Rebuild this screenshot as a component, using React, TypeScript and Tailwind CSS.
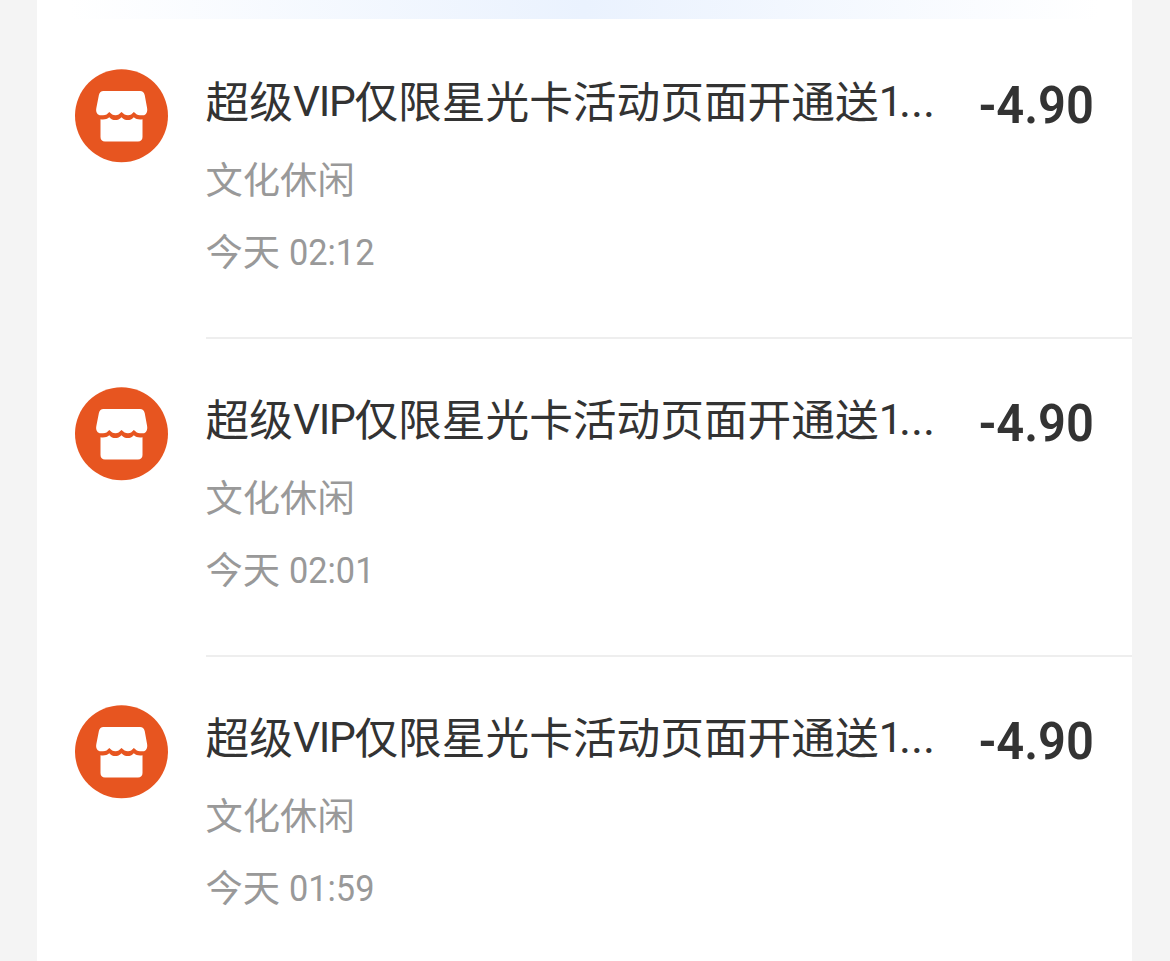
type Transaction = { time: string; amount: string };

const transactions: Transaction[] = [
  { time: "02:12", amount: "-4.90" },
  { time: "02:01", amount: "-4.90" },
  { time: "01:59", amount: "-4.90" },
];

function StoreIcon() {
  return (
    <svg viewBox="0 0 94 94" className="mt-[48px] h-[94px] w-[94px] shrink-0" aria-hidden="true">
      <circle cx="46.5" cy="46.7" r="46.5" fill="#e75520" />
      <path
        fill="#fff"
        d="M28.500 22H65C67.500 22 69 23.500 69.700 26L72 38.500C73 43 71 46.300 68 46.300H65C62.500 46.300 61 45 58.800 43C57 45 55.500 46.300 53 46.300C50.500 46.300 48.500 45 46.500 43C44.500 45 43 46.300 40.500 46.300C38 46.300 36.200 45 34.300 43C32.500 45 31 46.300 28 46.300H26C22.500 46.300 20.500 43.300 21.300 39.200L23.900 26C24.600 23.500 26 22 28.500 22Z"
      />
      <path
        fill="#fff"
        d="M25.500 50.200C29 51 32 50 34.300 48.200C37.500 52 43 52 46.500 48.200C50 52 55.500 52 58.800 48.200C61 50 64 51 67.500 50.200V68C67.500 70.800 65.700 72.500 63 72.500H30C27.200 72.500 25.500 70.800 25.500 68Z"
      />
    </svg>
  );
}

function TransactionRow({ item, last }: { item: Transaction; last: boolean }) {
  return (
    <li className="flex h-[318px] pl-[38px]">
      <StoreIcon />
      <div
        className={`ml-[36.500px] flex grow border-b-2 pr-[38px] ${last ? "border-transparent" : "border-[#eeeeee]"}`}
      >
        <div className="flex grow flex-col whitespace-nowrap">
          <h2 className="mt-[46px] flex h-[64px] text-[43.700px] leading-[64px] font-normal text-[#333333]">
            超级
            <span className="mt-[3px] w-[61.500px] font-[Roboto,sans-serif] text-[42.500px] tracking-[-1.300px]">
              VIP
            </span>
            仅限星光卡活动页面开通送
            <span className="mt-[3px] font-[Roboto,sans-serif] text-[42.500px] tracking-[-3.500px]">1</span>
            <span className="mt-[2px] font-[Roboto,sans-serif] text-[46px] tracking-[-0.200px]">...</span>
          </h2>
          <p className="mt-[19.500px] h-[54px] text-[37.300px] leading-[54px] text-[#999999]">文化休闲</p>
          <p className="mt-[18px] flex h-[54px] text-[37.300px] leading-[54px] text-[#999999]">
            今天
            <time className="mt-[3px] ml-[9px] origin-left scale-x-94 font-[Roboto,sans-serif] text-[36.500px]">
              {item.time}
            </time>
          </p>
        </div>
        <strong className="mt-[53px] h-[64px] origin-right scale-x-94 font-[Roboto,sans-serif] text-[52px] leading-[64px] font-semibold text-[#333333]">
          {item.amount}
        </strong>
      </div>
    </li>
  );
}

export default function App() {
  return (
    <div className="h-[961px] overflow-hidden bg-[#f4f4f4] pr-[38px] pl-[37px] font-['Noto_Sans_CJK_SC',sans-serif]">
      <main className="h-full bg-white">
        <div className="h-[19px] bg-linear-to-r from-white from-3% via-[#eaf2fe] via-50% to-white to-97%" />
        <ul className="pt-[2px]">
          {transactions.map((item, index) => (
            <TransactionRow key={item.time} item={item} last={index === transactions.length - 1} />
          ))}
        </ul>
      </main>
    </div>
  );
}
